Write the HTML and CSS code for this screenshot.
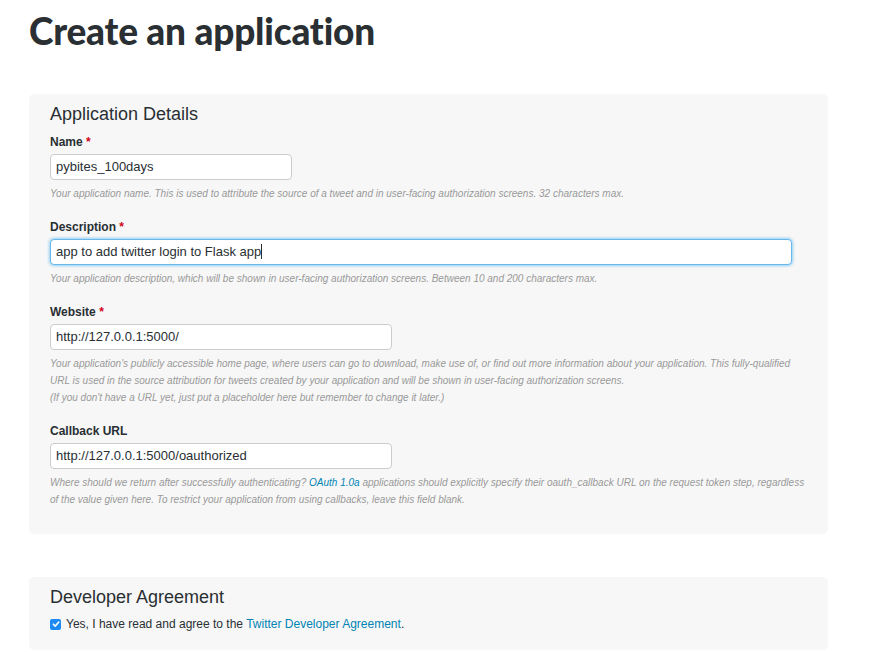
FILE: index.html
```html
<!DOCTYPE html>
<html>
<head>
<meta charset="utf-8">
<link rel="stylesheet" href="styles.css">
</head>
<body>
<div class="page">
  <h1 class="title">Create an application</h1>

  <section class="panel details">
    <h2 class="panel-heading">Application Details</h2>

    <div class="field">
      <label class="label">Name <span class="req">*</span></label>
      <div class="input short">pybites_100days</div>
      <p class="help">Your application name. This is used to attribute the source of a tweet and in user-facing authorization screens. 32 characters max.</p>
    </div>

    <div class="field">
      <label class="label">Description <span class="req">*</span></label>
      <div class="input wide focused">app to add twitter login to Flask app<span class="caret"></span></div>
      <p class="help">Your application description, which will be shown in user-facing authorization screens. Between 10 and 200 characters max.</p>
    </div>

    <div class="field">
      <label class="label">Website <span class="req">*</span></label>
      <div class="input medium">http://127.0.0.1:5000/</div>
      <p class="help">Your application's publicly accessible home page, where users can go to download, make use of, or find out more information about your application. This fully-qualified URL is used in the source attribution for tweets created by your application and will be shown in user-facing authorization screens.<br>(If you don't have a URL yet, just put a placeholder here but remember to change it later.)</p>
    </div>

    <div class="field">
      <label class="label">Callback URL</label>
      <div class="input medium">http://127.0.0.1:5000/oauthorized</div>
      <p class="help">Where should we return after successfully authenticating? <a class="help-link">OAuth 1.0a</a> applications should explicitly specify their oauth_callback URL on the request token step, regardless of the value given here. To restrict your application from using callbacks, leave this field blank.</p>
    </div>
  </section>

  <section class="panel agreement">
    <h2 class="panel-heading">Developer Agreement</h2>
    <div class="check-row">
      <span class="checkbox"><svg width="10" height="10" viewBox="0 0 10 10"><path d="M2.3 5.2 L4.2 7.1 L7.8 3" fill="none" stroke="#fff" stroke-width="1.6" stroke-linecap="round" stroke-linejoin="round"/></svg></span>
      <span class="check-text">Yes, I have read and agree to the <a class="link">Twitter Developer Agreement</a>.</span>
    </div>
  </section>
</div>
</body>
</html>
```

FILE: styles.css
```css
html, body {
  margin: 0;
  padding: 0;
  background: #fff;
}

.page {
  padding: 0 0 0 29px;
  width: 799px;
  font-family: "Liberation Sans", Arial, sans-serif;
  color: #333;
}

.title {
  margin: 0;
  padding-top: 9px;
  height: 85px;
  font-family: Lato, "Liberation Sans", sans-serif;
  font-weight: 900;
  font-size: 37px;
  line-height: 44px;
  color: #292f33;
  letter-spacing: -0.2px;
}

.panel {
  background: #f7f7f7;
  border-radius: 5px;
  padding: 10px 21px 0 21px;
  box-sizing: border-box;
}

.details {
  height: 440px;
}

.agreement {
  margin-top: 43px;
  height: 73px;
}

.panel-heading {
  margin: 0;
  font-weight: normal;
  font-size: 18px;
  line-height: 20px;
  color: #292f33;
}

.field {
  margin-top: 10px;
}

.field + .field {
  margin-top: 17px;
}

.label {
  display: block;
  font-weight: bold;
  font-size: 12px;
  line-height: 16px;
  color: #292f33;
}

.req {
  color: #d0021b;
}

.input {
  margin-top: 4px;
  height: 26px;
  box-sizing: border-box;
  background: #fff;
  border: 1px solid #ccc;
  border-radius: 4px;
  padding: 0 5px;
  font-size: 13px;
  line-height: 24px;
  color: #292f33;
  white-space: nowrap;
}

.short { width: 242px; }
.medium { width: 342px; }
.wide { width: 742px; }

.focused {
  border-color: #66b8ee;
  box-shadow: 0 0 3px 1px rgba(86, 180, 239, 0.6);
}

.caret {
  display: inline-block;
  width: 1px;
  height: 15px;
  background: #292f33;
  vertical-align: -3px;
}

.help {
  margin: 5px 0 0 0;
  font-style: italic;
  font-size: 10px;
  line-height: 17px;
  color: #999;
  width: 760px;
}

.help-link {
  color: #0084b4;
}

.check-row {
  margin-top: 9px;
  display: flex;
  align-items: center;
  gap: 5px;
}

.checkbox {
  width: 11px;
  height: 11px;
  border-radius: 2px;
  background: #1b8af5;
  display: flex;
  align-items: center;
  justify-content: center;
}

.checkbox svg {
  display: block;
  width: 10px;
  height: 10px;
}

.check-text {
  font-size: 12px;
  line-height: 16px;
  color: #292f33;
}

.link {
  color: #0084b4;
}
```
